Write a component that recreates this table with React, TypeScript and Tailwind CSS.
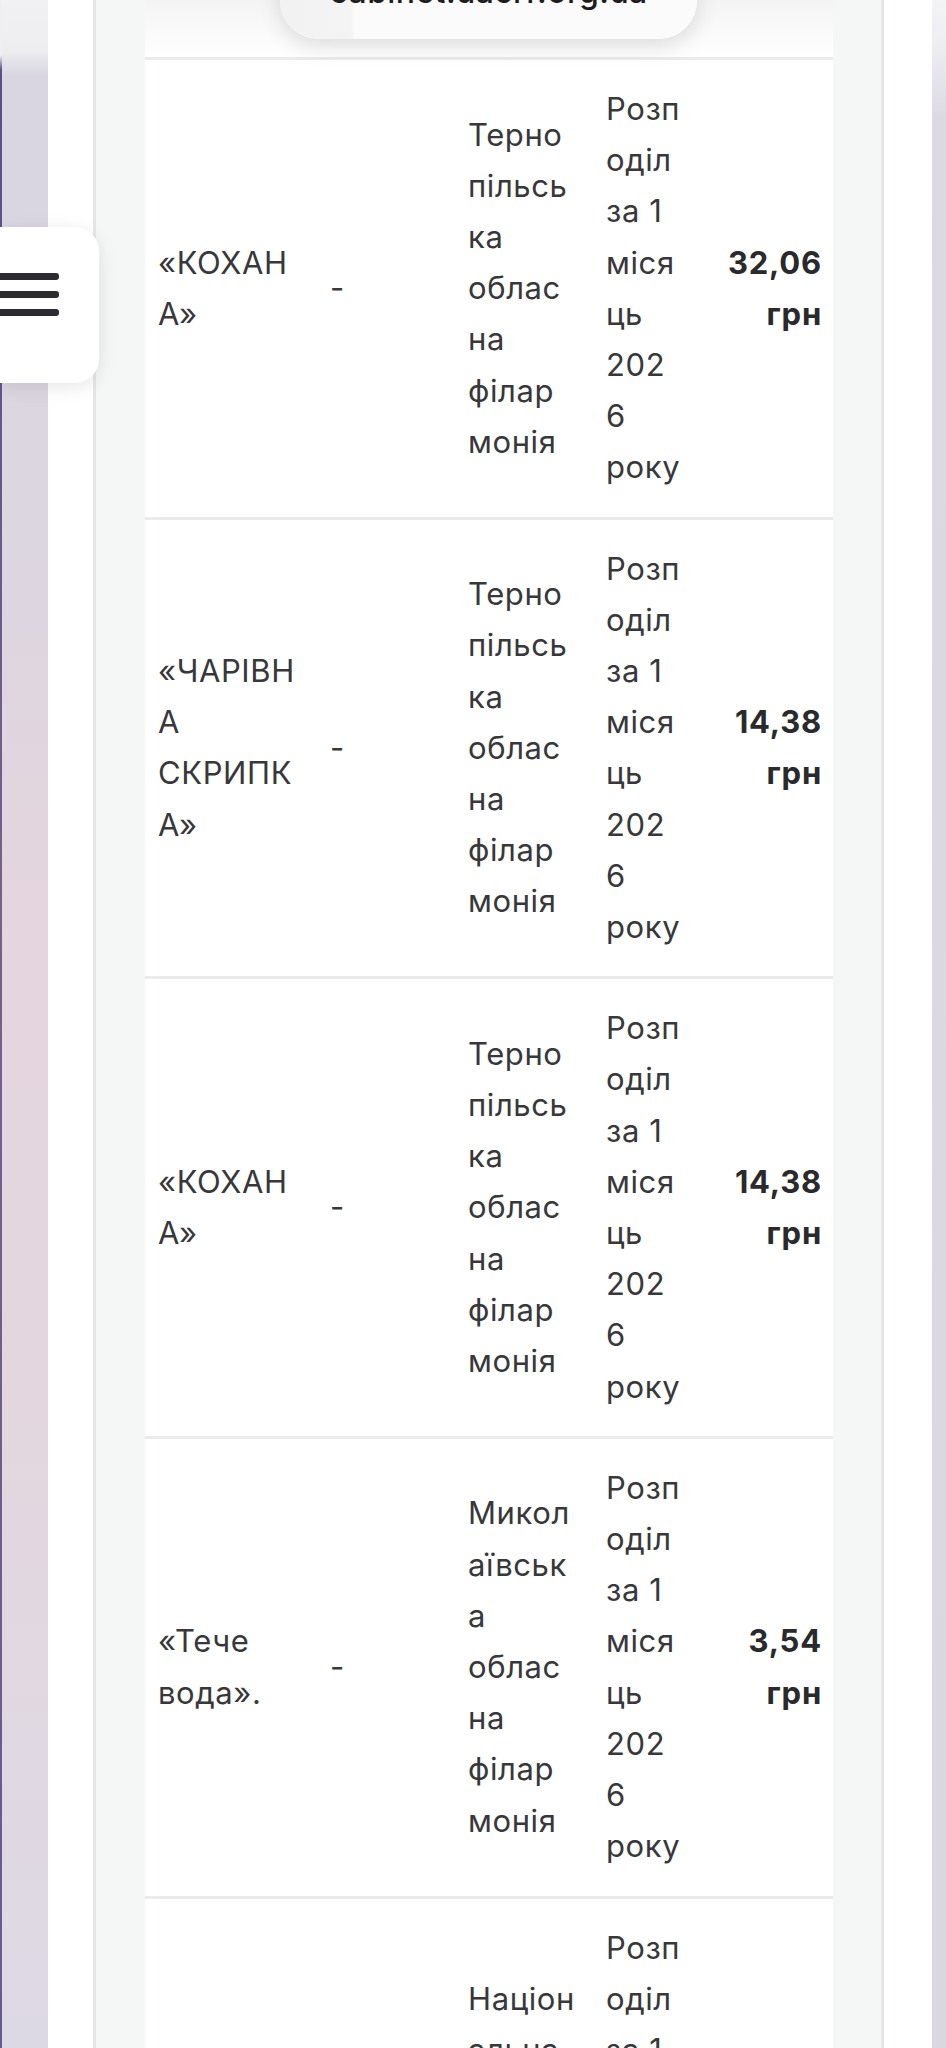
import React from 'react'

interface Row {
  title: string[]
  region: string[]
  price: string[]
}

const ternopil = ['Терно', 'пільсь', 'ка', 'облас', 'на', 'філар', 'монія']

const period = ['Розп', 'оділ', 'за 1', 'міся', 'ць', '202', '6', 'року']

const rows: Row[] = [
  { title: ['«КОХАН', 'А»'], region: ternopil, price: ['32,06', 'грн'] },
  { title: ['«ЧАРІВН', 'А', 'СКРИПК', 'А»'], region: ternopil, price: ['14,38', 'грн'] },
  { title: ['«КОХАН', 'А»'], region: ternopil, price: ['14,38', 'грн'] },
  {
    title: ['«Тече', 'вода».'],
    region: ['Микол', 'аївськ', 'а', 'облас', 'на', 'філар', 'монія'],
    price: ['3,54', 'грн'],
  },
  // last row runs past the bottom edge, only its top lines are visible
  {
    title: [],
    region: ['Націон', 'альна', 'філар', 'монія', 'Україн', 'и'],
    price: [],
  },
]

function Lines({ lines }: { lines: string[] }) {
  return (
    <div>
      {lines.map((l, i) => (
        <div key={i} className="whitespace-nowrap">
          {l}
        </div>
      ))}
    </div>
  )
}

function TableRow({ row }: { row: Row }) {
  return (
    <div className="grid grid-cols-[172px_138px_138px_137px_103px] border-t-[3px] border-[#ebebeb] pt-[23px] pb-[24px]">
      <div className="flex items-center pl-[13px]">
        <Lines lines={row.title} />
      </div>
      <div className="flex items-center pl-[13px]">{row.title.length > 0 ? '-' : ''}</div>
      <div className="flex items-center pl-[13px]">
        <Lines lines={row.region} />
      </div>
      <div className="flex items-center pl-[13px]">
        <Lines lines={period} />
      </div>
      <div className="flex items-center justify-end pr-[11px] text-right font-bold tracking-[0.8px] text-[#2a2a2c]">
        <Lines lines={row.price} />
      </div>
    </div>
  )
}

export default function App() {
  return (
    <div
      className="relative h-[2048px] w-[946px] overflow-hidden bg-white text-[31px] leading-[51.2px] tracking-[0.6px] text-[#38383a]"
      style={{ fontFamily: 'Inter, "Liberation Sans", sans-serif' }}
    >
      <div className="flex h-full">
        {/* left backdrop */}
        <div className="flex w-[48px] shrink-0">
          <div className="w-[2px] bg-[linear-gradient(to_bottom,#efeef1_0px,#efeef1_55px,#55508c_70px,#76608f_900px,#655a94_2048px)]" />
          <div className="flex-1 bg-[linear-gradient(to_bottom,#f1f0f3_0px,#eeedf0_50px,#d9d6e1_75px,#dbd6e0_500px,#e4d5de_900px,#e4d6de_1300px,#ddd9e4_2048px)]" />
        </div>

        <div className="flex flex-1 bg-white pl-[45px] pr-[48px]">
          <div className="flex flex-1 border-x-[3px] border-[#e6e6e8] bg-[#f5f6f6] px-[49px] pr-[48px]">
            <div className="flex-1 bg-white">
              <div className="h-[57px] bg-[linear-gradient(to_bottom,#f4f4f4,#ffffff)]" />
              {rows.map((row, i) => (
                <TableRow key={i} row={row} />
              ))}
            </div>
          </div>
        </div>

        <div className="w-[14px] shrink-0 bg-[linear-gradient(to_bottom,#f3f2f5_0px,#efeef2_40px,#dcd9e3_120px,#dad7e1_2048px)]" />
      </div>

      {/* address bar pill */}
      <div className="absolute left-[280px] top-[-40px] h-[79px] w-[417px] rounded-b-[38px] bg-[linear-gradient(to_right,#f2f2f2_0%,#f4f4f4_17%,#fbfbfb_18%,#fbfbfb_100%)] shadow-[0_8px_22px_rgba(0,0,0,0.12)]">
        <div className="absolute left-0 top-[16px] w-full text-center text-[32px] font-medium leading-[31px] tracking-[0.4px] text-[#1d1d1f]">
          cabinet.uacrr.org.ua
        </div>
      </div>

      {/* menu button */}
      <div className="absolute left-0 top-[227px] flex h-[156px] w-[99px] flex-col gap-[11px] rounded-r-[24px] bg-white pt-[46px] shadow-[0_4px_18px_rgba(0,0,0,0.1)]">
        <div className="h-[7px] w-[59px] rounded-r-[3px] bg-[#2b2b30]" />
        <div className="h-[7px] w-[59px] rounded-r-[3px] bg-[#2b2b30]" />
        <div className="h-[7px] w-[59px] rounded-r-[3px] bg-[#2b2b30]" />
      </div>
    </div>
  )
}
